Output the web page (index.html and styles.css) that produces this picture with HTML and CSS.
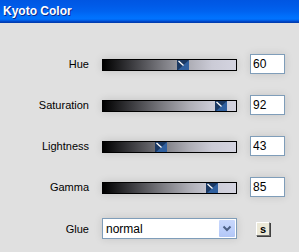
FILE: index.html
```html
<!DOCTYPE html>
<html lang="en">
<head>
    <meta charset="UTF-8">
    <title>Kyoto Color</title>
    <link rel="stylesheet" href="styles.css">
</head>
<body>

<div class="window">
    <div class="titlebar">Kyoto Color</div>

    <div class="panel">
        <div class="row">
            <label class="label">Hue</label>
            <div class="slider">
                <div class="thumb" style="left: 74px;">
                    <svg width="12" height="10" viewBox="0 0 12 10"><rect width="12" height="10" fill="#1a3862"/><path d="M12 0 L12 10 L1 10 Z" fill="#30609f"/><path d="M1.5 1 L6.5 5.5" stroke="#fff" stroke-width="1.3"/></svg>
                </div>
            </div>
            <input class="value" type="text" value="60">
        </div>

        <div class="row">
            <label class="label">Saturation</label>
            <div class="slider">
                <div class="thumb" style="left: 112px;">
                    <svg width="12" height="10" viewBox="0 0 12 10"><rect width="12" height="10" fill="#1a3862"/><path d="M12 0 L12 10 L1 10 Z" fill="#30609f"/><path d="M1.5 1 L6.5 5.5" stroke="#fff" stroke-width="1.3"/></svg>
                </div>
            </div>
            <input class="value" type="text" value="92">
        </div>

        <div class="row">
            <label class="label">Lightness</label>
            <div class="slider">
                <div class="thumb" style="left: 52px;">
                    <svg width="12" height="10" viewBox="0 0 12 10"><rect width="12" height="10" fill="#1a3862"/><path d="M12 0 L12 10 L1 10 Z" fill="#30609f"/><path d="M1.5 1 L6.5 5.5" stroke="#fff" stroke-width="1.3"/></svg>
                </div>
            </div>
            <input class="value" type="text" value="43">
        </div>

        <div class="row">
            <label class="label">Gamma</label>
            <div class="slider">
                <div class="thumb" style="left: 103px;">
                    <svg width="12" height="10" viewBox="0 0 12 10"><rect width="12" height="10" fill="#1a3862"/><path d="M12 0 L12 10 L1 10 Z" fill="#30609f"/><path d="M1.5 1 L6.5 5.5" stroke="#fff" stroke-width="1.3"/></svg>
                </div>
            </div>
            <input class="value" type="text" value="85">
        </div>

        <div class="row row-glue">
            <label class="label">Glue</label>
            <div class="combo">
                <span class="combo-text">normal</span>
                <span class="combo-button">
                    <svg width="16" height="17" viewBox="0 0 16 17"><polyline points="4.5,6.5 8,10 11.5,6.5" fill="none" stroke="#4d6185" stroke-width="2"/></svg>
                </span>
            </div>
            <button class="small-button">s</button>
        </div>
    </div>
</div>

</body>
</html>
```

FILE: styles.css
```css
:root {
    --panel-bg: #e0e0e0;
    --field-border: #7f9db9;
}
body {
    margin: 0;
    background-color: var(--panel-bg);
    font-family: 'Liberation Sans', Arial, sans-serif;
}
.window {
    width: 299px;
    height: 252px;
    overflow: hidden;
}
.titlebar {
    height: 23px;
    line-height: 23px;
    padding-left: 3px;
    color: #fff;
    font-size: 12px;
    font-weight: bold;
    text-shadow: 1px 1px 0 #0a2a8c;
    background: linear-gradient(to bottom, #0056e2 0%, #005be8 25%, #0063f0 50%, #006ffb 70%, #0073ff 82%, #0062ec 88%, #0048c8 93%, #0038a8 100%);
}
.panel {
    padding-top: 31px;
}
.row {
    display: flex;
    align-items: center;
    height: 20px;
    margin-bottom: 21px;
}
.row-glue {
    height: 21px;
    margin-top: 2px;
}
.label {
    width: 89px;
    text-align: right;
    font-size: 11px;
    color: #000;
}
.slider {
    position: relative;
    box-sizing: border-box;
    width: 135px;
    height: 12px;
    margin-left: 13px;
    margin-top: 1px;
    border: 1px solid #000;
    background: linear-gradient(to right, #000 0%, #3c3c40 22%, #7c7c82 45%, #aeaeb6 65%, #cbcbd6 82%, #d4d4e0 100%);
    box-shadow: 0 0 8px rgba(0, 0, 0, 0.14);
}
.thumb {
    position: absolute;
    top: 0;
    width: 12px;
    height: 10px;
}
.thumb svg {
    display: block;
}
.value {
    box-sizing: border-box;
    width: 35px;
    height: 20px;
    margin: 0 0 0 13px;
    padding: 0 0 0 2px;
    border: 1px solid var(--field-border);
    background: #fff;
    font-family: 'Liberation Sans', Arial, sans-serif;
    font-size: 12px;
    color: #000;
    outline: none;
    box-shadow: 0 0 8px rgba(0, 0, 0, 0.12);
}
.combo {
    box-sizing: border-box;
    display: flex;
    align-items: center;
    width: 135px;
    height: 21px;
    margin-left: 13px;
    border: 1px solid var(--field-border);
    background: #fff;
    box-shadow: 0 0 8px rgba(0, 0, 0, 0.12);
}
.combo-text {
    flex: 1;
    padding-left: 3px;
    font-size: 12px;
    color: #000;
}
.combo-button {
    width: 16px;
    height: 17px;
    margin-right: 1px;
    background: linear-gradient(to bottom, #c9d8fc 0%, #bccffb 60%, #b2c6f6 100%);
    border-radius: 1px;
}
.combo-button svg {
    display: block;
}
.small-button {
    box-sizing: border-box;
    width: 14px;
    height: 14px;
    margin-left: 19px;
    padding: 0;
    border: 1px solid;
    border-color: #fff #707070 #707070 #fff;
    background: #ece9d8;
    font-family: 'Liberation Sans', Arial, sans-serif;
    font-size: 11px;
    font-weight: bold;
    line-height: 10px;
    color: #000;
    box-shadow: 1px 1px 0 #404040;
}
```
